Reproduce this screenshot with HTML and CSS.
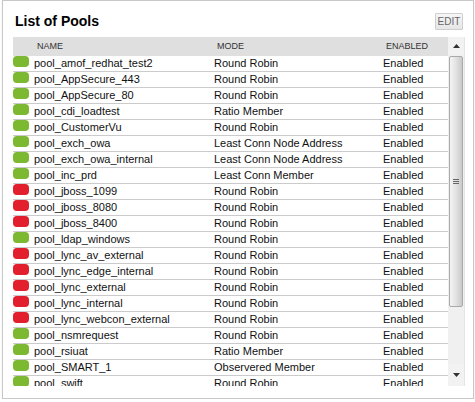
FILE: index.html
```html
<!DOCTYPE html>
<html>
<head>
<meta charset="utf-8">
<link rel="stylesheet" href="styles.css">
</head>
<body>
<div class="panel">
  <div class="top">
    <h1 class="title">List of Pools</h1>
    <button class="edit">EDIT</button>
  </div>
  <div class="listwrap">
    <div class="list">
      <div class="row head">
        <span></span><span class="hc">NAME</span><span class="hc">MODE</span><span class="hc">ENABLED</span>
      </div>
      <div class="row"><span class="st ok"></span><span>pool_amof_redhat_test2</span><span>Round Robin</span><span>Enabled</span></div>
      <div class="row"><span class="st ok"></span><span>pool_AppSecure_443</span><span>Round Robin</span><span>Enabled</span></div>
      <div class="row"><span class="st ok"></span><span>pool_AppSecure_80</span><span>Round Robin</span><span>Enabled</span></div>
      <div class="row"><span class="st ok"></span><span>pool_cdi_loadtest</span><span>Ratio Member</span><span>Enabled</span></div>
      <div class="row"><span class="st ok"></span><span>pool_CustomerVu</span><span>Round Robin</span><span>Enabled</span></div>
      <div class="row"><span class="st ok"></span><span>pool_exch_owa</span><span>Least Conn Node Address</span><span>Enabled</span></div>
      <div class="row"><span class="st ok"></span><span>pool_exch_owa_internal</span><span>Least Conn Node Address</span><span>Enabled</span></div>
      <div class="row"><span class="st ok"></span><span>pool_inc_prd</span><span>Least Conn Member</span><span>Enabled</span></div>
      <div class="row"><span class="st down"></span><span>pool_jboss_1099</span><span>Round Robin</span><span>Enabled</span></div>
      <div class="row"><span class="st down"></span><span>pool_jboss_8080</span><span>Round Robin</span><span>Enabled</span></div>
      <div class="row"><span class="st down"></span><span>pool_jboss_8400</span><span>Round Robin</span><span>Enabled</span></div>
      <div class="row"><span class="st ok"></span><span>pool_ldap_windows</span><span>Round Robin</span><span>Enabled</span></div>
      <div class="row"><span class="st down"></span><span>pool_lync_av_external</span><span>Round Robin</span><span>Enabled</span></div>
      <div class="row"><span class="st down"></span><span>pool_lync_edge_internal</span><span>Round Robin</span><span>Enabled</span></div>
      <div class="row"><span class="st down"></span><span>pool_lync_external</span><span>Round Robin</span><span>Enabled</span></div>
      <div class="row"><span class="st down"></span><span>pool_lync_internal</span><span>Round Robin</span><span>Enabled</span></div>
      <div class="row"><span class="st down"></span><span>pool_lync_webcon_external</span><span>Round Robin</span><span>Enabled</span></div>
      <div class="row"><span class="st ok"></span><span>pool_nsmrequest</span><span>Round Robin</span><span>Enabled</span></div>
      <div class="row"><span class="st ok"></span><span>pool_rsiuat</span><span>Ratio Member</span><span>Enabled</span></div>
      <div class="row"><span class="st ok"></span><span>pool_SMART_1</span><span>Observered Member</span><span>Enabled</span></div>
      <div class="row"><span class="st ok"></span><span>pool_swift</span><span>Round Robin</span><span>Enabled</span></div>
    </div>
    <div class="sbar">
      <div class="sbtn"><svg width="7" height="4" viewBox="0 0 7 4"><path d="M3.5 0 L7 4 L0 4 Z" fill="#333"/></svg></div>
      <div class="thumb">
        <div class="grip"><i></i><i></i><i></i></div>
      </div>
      <div class="track"></div>
      <div class="sbtn dn"><svg width="7" height="4" viewBox="0 0 7 4"><path d="M0 0 L7 0 L3.5 4 Z" fill="#333"/></svg></div>
    </div>
  </div>
</div>
</body>
</html>
```

FILE: styles.css
```css
html, body {
  margin: 0;
  padding: 0;
  background: #fff;
}
body {
  font-family: "Liberation Sans", Arial, sans-serif;
  color: #111;
}
.panel {
  margin-left: 2px;
  width: 472px;
  height: 399px;
  box-sizing: border-box;
  border: 1px solid #c8c8c8;
  padding: 0 8px 0 10px;
  box-shadow: 0 1px 2px rgba(0,0,0,0.08);
}
.top {
  height: 36px;
  display: flex;
  align-items: flex-start;
  justify-content: space-between;
}
.title {
  margin: 12px 0 0 2px;
  font-size: 14px;
  line-height: 17px;
  font-weight: bold;
  color: #000;
}
.edit {
  margin: 12px 2px 0 0;
  width: 28px;
  height: 17px;
  padding: 0;
  border: 1px solid #cfcfcf;
  background: linear-gradient(#f6f6f6, #e6e6e6);
  font-family: "Liberation Sans", Arial, sans-serif;
  font-size: 10px;
  line-height: 15px;
  color: #666;
  border-radius: 1px;
}
.listwrap {
  display: flex;
  height: 349px;
}
.list {
  width: 435px;
  overflow: hidden;
}
.row {
  display: grid;
  grid-template-columns: 16px 185px 169px 1fr;
  column-gap: 0;
  height: 15px;
  border-bottom: 1px solid #cbcbcb;
  font-size: 11px;
  line-height: 15px;
  white-space: nowrap;
}
.row > span:nth-child(2) {
  padding-left: 5px;
}
.head {
  height: 19px;
  border-bottom: 0;
  background: #dfdfdf;
  font-size: 9px;
  line-height: 19px;
  color: #333;
}
.head .hc {
  padding-left: 3px;
}
.head > span:nth-child(2) {
  padding-left: 8px;
}
.st {
  width: 16px;
  height: 11px;
  border-radius: 4px;
}
.ok { background: #7cb930; }
.down { background: #e21f2c; }
.sbar {
  width: 17px;
  display: flex;
  flex-direction: column;
  background: #f0f0f0;
  border-right: 1px solid #e4e4e4;
  box-sizing: border-box;
}
.sbtn {
  height: 18px;
  display: flex;
  align-items: center;
  justify-content: center;
  background: #f2f2f2;
}
.sbtn.dn {
  height: 22px;
}
.thumb {
  height: 249px;
  margin: 1px 1px 0 1px;
  border: 1px solid #a9a9a9;
  border-radius: 2px;
  background: linear-gradient(to right, #f4f4f4, #e4e4e4 45%, #c9c9c9);
  display: flex;
  align-items: center;
  justify-content: center;
}
.grip {
  display: flex;
  flex-direction: column;
  gap: 1px;
}
.grip i {
  display: block;
  width: 6px;
  height: 1px;
  background: #666;
}
.track {
  flex: 1;
}
```
